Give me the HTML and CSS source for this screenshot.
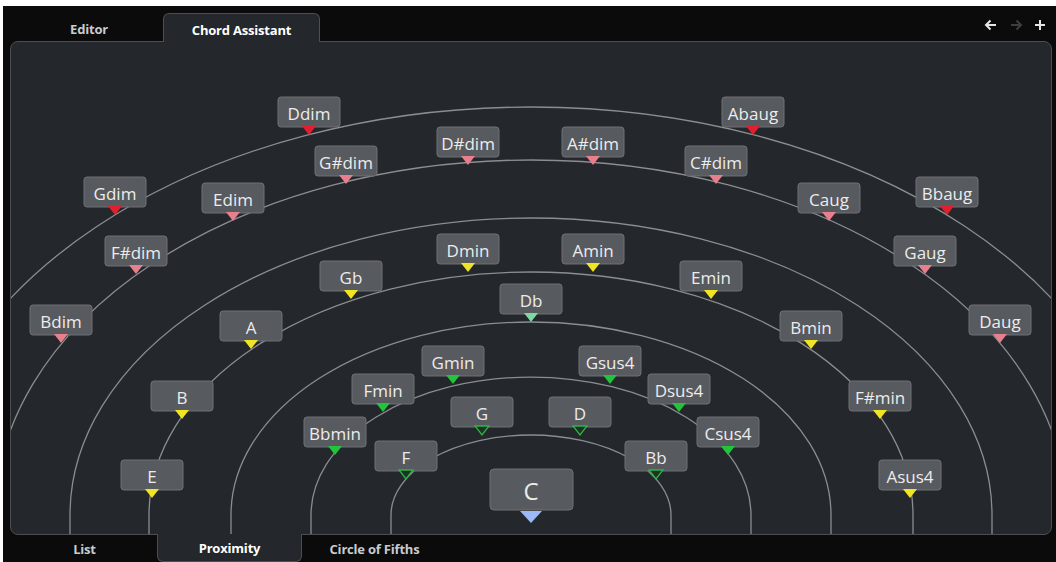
FILE: index.html
```html
<!DOCTYPE html>
<html lang="en">
<head>
<meta charset="utf-8">
<title>Chord Assistant</title>
<link rel="stylesheet" href="styles.css">
</head>
<body>
<div class="app">
  <div class="topbar">
    <div class="tab">Editor</div>
    <div class="tab tab-top-active">Chord Assistant</div>
    <div class="tools">
      <svg class="tool" width="14" height="12" viewBox="0 0 14 12"><path d="M2 6 H12 M6.5 1.5 L2 6 L6.5 10.5" fill="none" stroke="#e6e6e6" stroke-width="2"/></svg>
      <svg class="tool" width="14" height="12" viewBox="0 0 14 12"><path d="M2 6 H12 M7.5 1.5 L12 6 L7.5 10.5" fill="none" stroke="#3c3e41" stroke-width="2"/></svg>
      <svg class="tool" width="12" height="12" viewBox="0 0 12 12"><path d="M6 1 V11 M1 6 H11" fill="none" stroke="#e6e6e6" stroke-width="2"/></svg>
    </div>
  </div>
  <div class="panel">
    <svg class="canvas" viewBox="11 42 1040 492" preserveAspectRatio="none">
      <g class="arcs">
        <path d="M391 540 L391 515 A140 80 0 0 1 671 515 L671 540"/>
        <path d="M311 540 L311 515 A220 138 0 0 1 751 515 L751 540"/>
        <path d="M231 540 L231 515 A300 193 0 0 1 831 515 L831 540"/>
        <path d="M149 540 L149 515 A382 243 0 0 1 913 515 L913 540"/>
        <path d="M70 540 L70 515 A461 297 0 0 1 992 515 L992 540"/>
        <path d="M-5 540 L-5 515 A536 355 0 0 1 1067 515 L1067 540"/>
        <path d="M-83 540 L-83 515 A614 408 0 0 1 1145 515 L1145 540"/>
      </g>

      <!-- outer ring: red -->
      <g class="chord"><rect x="84" y="177" width="62" height="30" rx="3"/><text x="115" y="193">Gdim</text><polygon class="t-red" points="108,206 122,206 115,215"/></g>
      <g class="chord"><rect x="278" y="97" width="62" height="30" rx="3"/><text x="309" y="113">Ddim</text><polygon class="t-red" points="302,126 316,126 309,135"/></g>
      <g class="chord"><rect x="722" y="97" width="62" height="30" rx="3"/><text x="753" y="113">Abaug</text><polygon class="t-red" points="746,126 760,126 753,135"/></g>
      <g class="chord"><rect x="916" y="177" width="62" height="30" rx="3"/><text x="947" y="193">Bbaug</text><polygon class="t-red" points="940,206 954,206 947,215"/></g>

      <!-- second ring: pink -->
      <g class="chord"><rect x="30" y="305" width="62" height="30" rx="3"/><text x="61" y="321">Bdim</text><polygon class="t-pink" points="54,334 68,334 61,343"/></g>
      <g class="chord"><rect x="105" y="236" width="62" height="30" rx="3"/><text x="136" y="252">F#dim</text><polygon class="t-pink" points="129,265 143,265 136,274"/></g>
      <g class="chord"><rect x="202" y="183" width="62" height="30" rx="3"/><text x="233" y="199">Edim</text><polygon class="t-pink" points="226,212 240,212 233,221"/></g>
      <g class="chord"><rect x="315" y="146" width="62" height="30" rx="3"/><text x="346" y="162">G#dim</text><polygon class="t-pink" points="339,175 353,175 346,184"/></g>
      <g class="chord"><rect x="437" y="127" width="62" height="30" rx="3"/><text x="468" y="143">D#dim</text><polygon class="t-pink" points="461,156 475,156 468,165"/></g>
      <g class="chord"><rect x="562" y="127" width="62" height="30" rx="3"/><text x="593" y="143">A#dim</text><polygon class="t-pink" points="586,156 600,156 593,165"/></g>
      <g class="chord"><rect x="685" y="146" width="62" height="30" rx="3"/><text x="716" y="162">C#dim</text><polygon class="t-pink" points="709,175 723,175 716,184"/></g>
      <g class="chord"><rect x="798" y="183" width="62" height="30" rx="3"/><text x="829" y="199">Caug</text><polygon class="t-pink" points="822,212 836,212 829,221"/></g>
      <g class="chord"><rect x="894" y="236" width="62" height="30" rx="3"/><text x="925" y="252">Gaug</text><polygon class="t-pink" points="918,265 932,265 925,274"/></g>
      <g class="chord"><rect x="969" y="305" width="62" height="30" rx="3"/><text x="1000" y="321">Daug</text><polygon class="t-pink" points="993,334 1007,334 1000,343"/></g>

      <!-- yellow ring -->
      <g class="chord"><rect x="121" y="460" width="62" height="30" rx="3"/><text x="152" y="476">E</text><polygon class="t-yellow" points="145,489 159,489 152,498"/></g>
      <g class="chord"><rect x="151" y="381" width="62" height="30" rx="3"/><text x="182" y="397">B</text><polygon class="t-yellow" points="175,410 189,410 182,419"/></g>
      <g class="chord"><rect x="220" y="311" width="62" height="30" rx="3"/><text x="251" y="327">A</text><polygon class="t-yellow" points="244,340 258,340 251,349"/></g>
      <g class="chord"><rect x="320" y="261" width="62" height="30" rx="3"/><text x="351" y="277">Gb</text><polygon class="t-yellow" points="344,290 358,290 351,299"/></g>
      <g class="chord"><rect x="437" y="234" width="62" height="30" rx="3"/><text x="468" y="250">Dmin</text><polygon class="t-yellow" points="461,263 475,263 468,272"/></g>
      <g class="chord"><rect x="562" y="234" width="62" height="30" rx="3"/><text x="593" y="250">Amin</text><polygon class="t-yellow" points="586,263 600,263 593,272"/></g>
      <g class="chord"><rect x="680" y="261" width="62" height="30" rx="3"/><text x="711" y="277">Emin</text><polygon class="t-yellow" points="704,290 718,290 711,299"/></g>
      <g class="chord"><rect x="780" y="311" width="62" height="30" rx="3"/><text x="811" y="327">Bmin</text><polygon class="t-yellow" points="804,340 818,340 811,349"/></g>
      <g class="chord"><rect x="849" y="381" width="62" height="30" rx="3"/><text x="880" y="397">F#min</text><polygon class="t-yellow" points="873,410 887,410 880,419"/></g>
      <g class="chord"><rect x="879" y="460" width="62" height="30" rx="3"/><text x="910" y="476">Asus4</text><polygon class="t-yellow" points="903,489 917,489 910,498"/></g>

      <!-- Db -->
      <g class="chord"><rect x="500" y="284" width="62" height="30" rx="3"/><text x="531" y="300">Db</text><polygon class="t-mint" points="524,313 538,313 531,322"/></g>

      <!-- green ring -->
      <g class="chord"><rect x="304" y="417" width="62" height="30" rx="3"/><text x="335" y="433">Bbmin</text><polygon class="t-green" points="328,446 342,446 335,455"/></g>
      <g class="chord"><rect x="352" y="374" width="62" height="30" rx="3"/><text x="383" y="390">Fmin</text><polygon class="t-green" points="376,403 390,403 383,412"/></g>
      <g class="chord"><rect x="422" y="346" width="62" height="30" rx="3"/><text x="453" y="362">Gmin</text><polygon class="t-green" points="446,375 460,375 453,384"/></g>
      <g class="chord"><rect x="579" y="346" width="62" height="30" rx="3"/><text x="610" y="362">Gsus4</text><polygon class="t-green" points="603,375 617,375 610,384"/></g>
      <g class="chord"><rect x="648" y="374" width="62" height="30" rx="3"/><text x="679" y="390">Dsus4</text><polygon class="t-green" points="672,403 686,403 679,412"/></g>
      <g class="chord"><rect x="697" y="417" width="62" height="30" rx="3"/><text x="728" y="433">Csus4</text><polygon class="t-green" points="721,446 735,446 728,455"/></g>

      <!-- inner ring -->
      <g class="chord"><rect x="375" y="441" width="62" height="30" rx="3"/><text x="406" y="457">F</text><polygon class="t-hollow" points="399,470 413,470 406,479"/></g>
      <g class="chord"><rect x="451" y="397" width="62" height="30" rx="3"/><text x="482" y="413">G</text><polygon class="t-hollow" points="475,426 489,426 482,435"/></g>
      <g class="chord"><rect x="549" y="397" width="62" height="30" rx="3"/><text x="580" y="413">D</text><polygon class="t-hollow" points="573,426 587,426 580,435"/></g>
      <g class="chord"><rect x="625" y="441" width="62" height="30" rx="3"/><text x="656" y="457">Bb</text><polygon class="t-hollow" points="649,470 663,470 656,479"/></g>

      <!-- center -->
      <g class="chord chord-main"><rect x="490" y="469" width="83" height="41" rx="4"/><text x="531" y="490">C</text><polygon class="t-blue" points="520,511 542,511 531,523"/></g>
    </svg>
  </div>
  <div class="bottombar">
    <div class="btab">List</div>
    <div class="btab btab-active">Proximity</div>
    <div class="btab">Circle of Fifths</div>
  </div>
</div>
</body>
</html>
```

FILE: styles.css
```css
html, body {
  margin: 0;
  padding: 0;
  background: #ffffff;
}

.app {
  margin: 6px 0 0 3px;
  height: 556px;
  background: #0b0b0c;
  display: flex;
  flex-direction: column;
  font-family: "Open Sans", "Noto Sans", sans-serif;
}

.topbar {
  height: 35px;
  flex: none;
  display: flex;
  align-items: flex-end;
  padding-left: 12px;
}

.tab {
  width: 148px;
  height: 28px;
  box-sizing: border-box;
  display: flex;
  align-items: center;
  justify-content: center;
  padding-top: 3px;
  font-size: 13px;
  font-weight: 700;
  letter-spacing: -0.2px;
  color: #c8cbcf;
}

.tab-top-active {
  width: 157px;
  background: #24272b;
  border: 1px solid #4b4e53;
  border-bottom: none;
  border-radius: 6px 6px 0 0;
  color: #ffffff;
  margin-bottom: -1px;
  height: 29px;
  position: relative;
  z-index: 1;
}

.tools {
  margin-left: auto;
  margin-right: 10px;
  align-self: center;
  display: flex;
  align-items: center;
  gap: 11px;
  padding-top: 2px;
}

.tool {
  display: block;
}

.panel {
  flex: 1;
  margin: 0 4px 0 7px;
  background: #24272b;
  border: 1px solid #4b4e53;
  border-radius: 8px;
  overflow: hidden;
}

.canvas {
  display: block;
  width: 100%;
  height: 100%;
}

.arcs path {
  fill: none;
  stroke: #8a8d91;
  stroke-width: 1.3;
}

.chord rect {
  fill: #575a5e;
  stroke: #6e7175;
  stroke-width: 1;
}

.chord text {
  fill: #ececec;
  font-family: "Open Sans", "Noto Sans", sans-serif;
  font-size: 17px;
  text-anchor: middle;
  dominant-baseline: central;
}

.chord-main text {
  font-size: 24px;
}

.t-red { fill: #e0202e; }
.t-pink { fill: #e7808c; }
.t-yellow { fill: #f0e424; }
.t-green { fill: #22c43c; }
.t-mint { fill: #7ed8a4; }
.t-hollow { fill: #1d3324; stroke: #2fb448; stroke-width: 1.3; }
.t-blue { fill: #9bb9f6; }

.bottombar {
  height: 27px;
  flex: none;
  display: flex;
  padding-left: 9px;
}

.btab {
  width: 145px;
  height: 27px;
  box-sizing: border-box;
  display: flex;
  align-items: center;
  justify-content: center;
  font-size: 13px;
  font-weight: 700;
  letter-spacing: -0.2px;
  color: #c8cbcf;
}

.btab-active {
  background: #24272b;
  border: 1px solid #4b4e53;
  border-top: none;
  border-radius: 0 0 6px 6px;
  margin-top: -1px;
  height: 28px;
  color: #ffffff;
  position: relative;
  z-index: 1;
}
```
